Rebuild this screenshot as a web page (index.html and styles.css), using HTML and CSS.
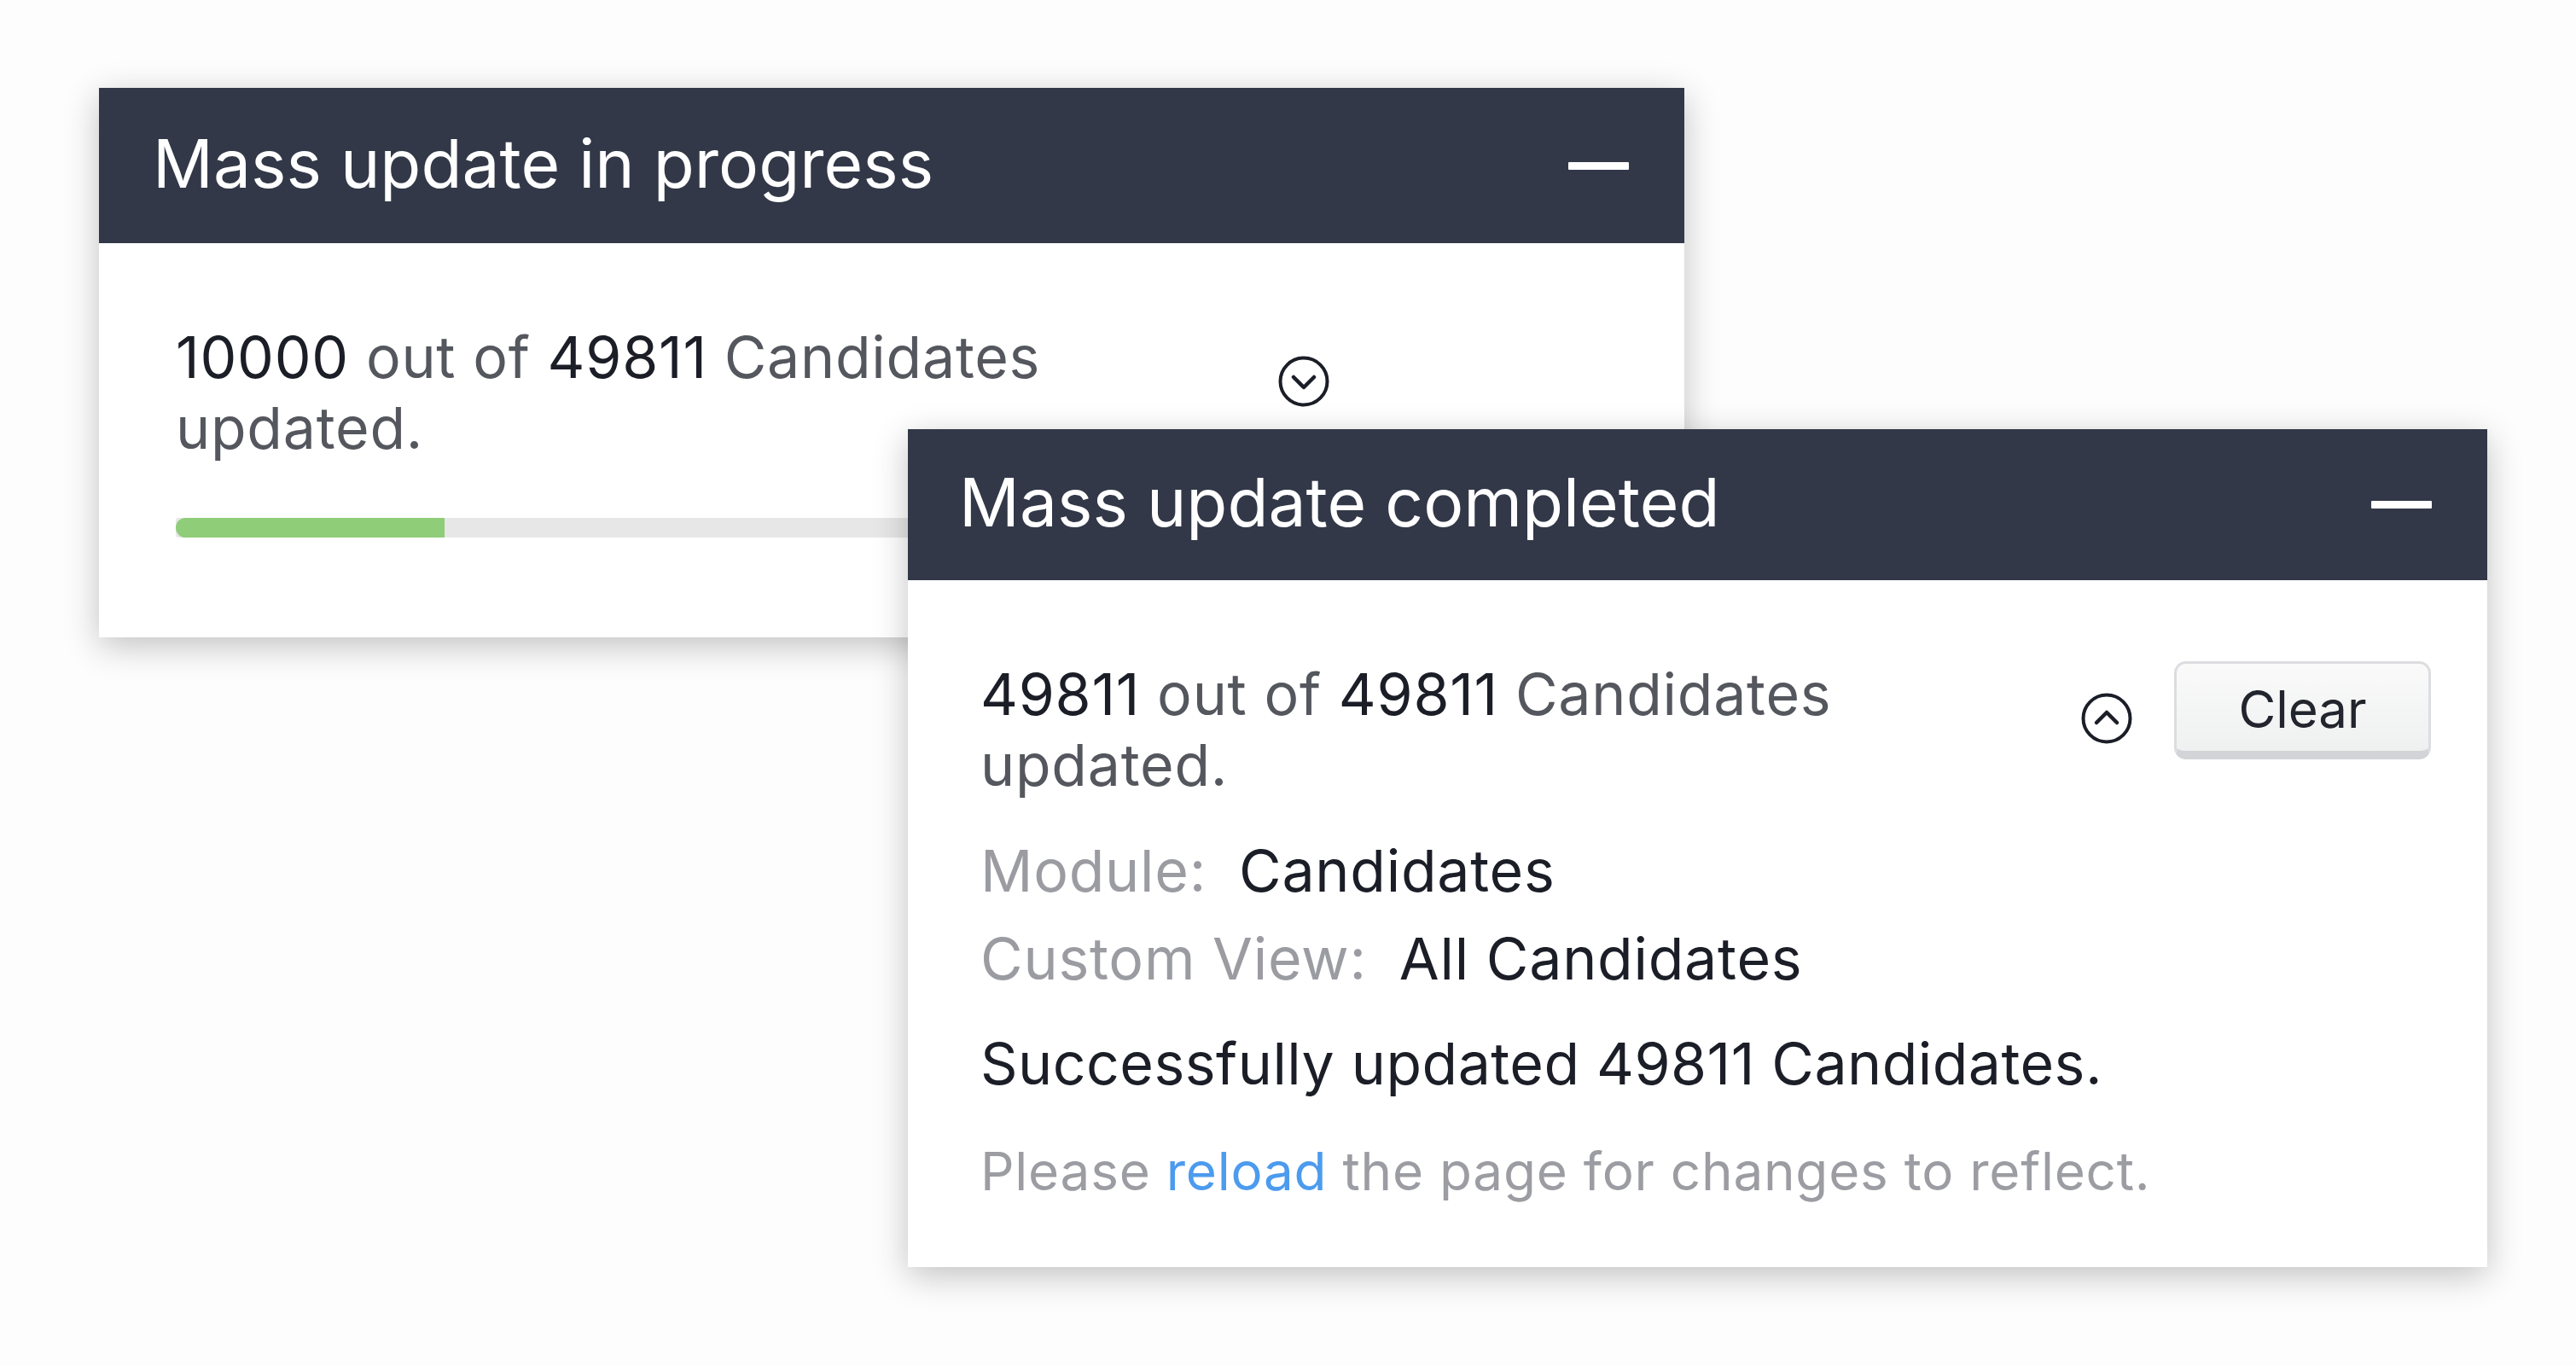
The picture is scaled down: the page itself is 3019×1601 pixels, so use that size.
FILE: index.html
```html
<!DOCTYPE html>
<html>
<head>
  <title>Mass update</title>
  <meta charset="UTF-8">
  <link rel="stylesheet" href="styles.css">
</head>
<body>
  <div id="stage">
    <div class="panel" id="progress-panel">
      <div class="panel-head">
        <span class="panel-title">Mass update in progress</span>
        <span class="minimize"></span>
      </div>
      <div class="panel-body">
        <div class="row">
          <div class="msg">
            <p><b>10000</b> <span>out of</span> <b>49811</b> <span>Candidates</span> <span>updated.</span></p>
          </div>
          <svg class="toggle" viewBox="0 0 60 60">
            <circle cx="30" cy="30" r="27.5" fill="none" stroke="#1b1e27" stroke-width="4"/>
            <path d="M18 25 L30 37 L42 25" fill="none" stroke="#1b1e27" stroke-width="4.5" stroke-linecap="round" stroke-linejoin="round"/>
          </svg>
          <div class="btn-space"></div>
        </div>
        <div class="bar"><div class="bar-fill"></div></div>
      </div>
    </div>

    <div class="panel" id="done-panel">
      <div class="panel-head">
        <span class="panel-title">Mass update completed</span>
        <span class="minimize"></span>
      </div>
      <div class="panel-body">
        <div class="row">
          <div class="msg">
            <p><b>49811</b> <span>out of</span> <b>49811</b> <span>Candidates</span> <span>updated.</span></p>
          </div>
          <svg class="toggle" viewBox="0 0 60 60">
            <circle cx="30" cy="30" r="27.5" fill="none" stroke="#1b1e27" stroke-width="4"/>
            <path d="M18 35 L30 23 L42 35" fill="none" stroke="#1b1e27" stroke-width="4.5" stroke-linecap="round" stroke-linejoin="round"/>
          </svg>
          <button class="clear-btn">Clear</button>
        </div>
        <div class="meta first"><span class="label">Module:</span>Candidates</div>
        <div class="meta"><span class="label">Custom View:</span>All Candidates</div>
        <p class="success">Successfully updated 49811 Candidates.</p>
        <p class="note">Please <a href="#">reload</a> the page for changes to reflect.</p>
      </div>
    </div>
  </div>
</body>
</html>
```

FILE: styles.css
```css
body {
  font-family: Inter, "Noto Sans", sans-serif;
  margin: 0;
  padding: 0;
  background-color: #fdfdfd;
}

#stage {
  padding: 103px 0 116px 116px;
}

.panel {
  background-color: #fff;
  box-shadow: 0 10px 38px rgba(0, 0, 0, 0.24);
}

#progress-panel {
  width: 1858px;
}

#done-panel {
  position: relative;
  width: 1851px;
  margin-top: -244px;
  margin-left: 948px;
}

.panel-head {
  height: 182px;
  background-color: #323848;
  display: flex;
  align-items: center;
  justify-content: space-between;
  padding: 0 65px 0 63px;
}

#done-panel .panel-head {
  height: 177px;
  padding-left: 60px;
}

.panel-title {
  color: #fff;
  font-size: 78.5px;
  font-weight: 400;
  margin-top: -6px;
}

.minimize {
  width: 71px;
  height: 9px;
  background-color: #fff;
  border-radius: 1px;
}

.panel-body {
  padding: 92px 66px 71px 85px;
  font-size: 68px;
  line-height: 83px;
  letter-spacing: 0.75px;
  color: #1b1e27;
}

#progress-panel .panel-body {
  padding-left: 90px;
  padding-bottom: 117px;
}

.row {
  display: flex;
  align-items: flex-start;
}

.msg {
  flex: 1;
}

.msg p {
  margin: 0;
  max-width: 1100px;
  color: #55575e;
}

.msg b {
  font-weight: 400;
  color: #1b1e27;
}

.toggle {
  width: 60px;
  height: 60px;
  margin-top: 40px;
  margin-right: 49px;
}

.btn-space {
  width: 301px;
}

.clear-btn {
  width: 301px;
  height: 115px;
  margin-top: 3px;
  box-sizing: border-box;
  font-family: Inter, "Noto Sans", sans-serif;
  font-size: 60px;
  color: #22252d;
  background: linear-gradient(#fafafa, #eff0f0);
  border: 3px solid #dcdde0;
  border-bottom: 10px solid #d3d4d7;
  border-radius: 14px;
  padding: 3px 0 0;
}

.bar {
  margin-top: 64px;
  height: 23px;
  background-color: #e7e7e7;
  border-radius: 3px;
}

.bar-fill {
  width: 315px;
  height: 100%;
  background-color: #8fcd78;
  border-radius: 12px 0 0 12px;
}

.meta {
  margin-top: 20px;
}

.meta.first {
  margin-top: 41px;
}

.label {
  color: #9b9ca2;
  margin-right: 38px;
}

.success {
  margin: 40px 0 0;
  letter-spacing: 0.45px;
}

.note {
  margin: 43px 0 0;
  font-size: 62px;
  color: #9c9da3;
}

.note a {
  color: #4c9bee;
  text-decoration: none;
}
```
